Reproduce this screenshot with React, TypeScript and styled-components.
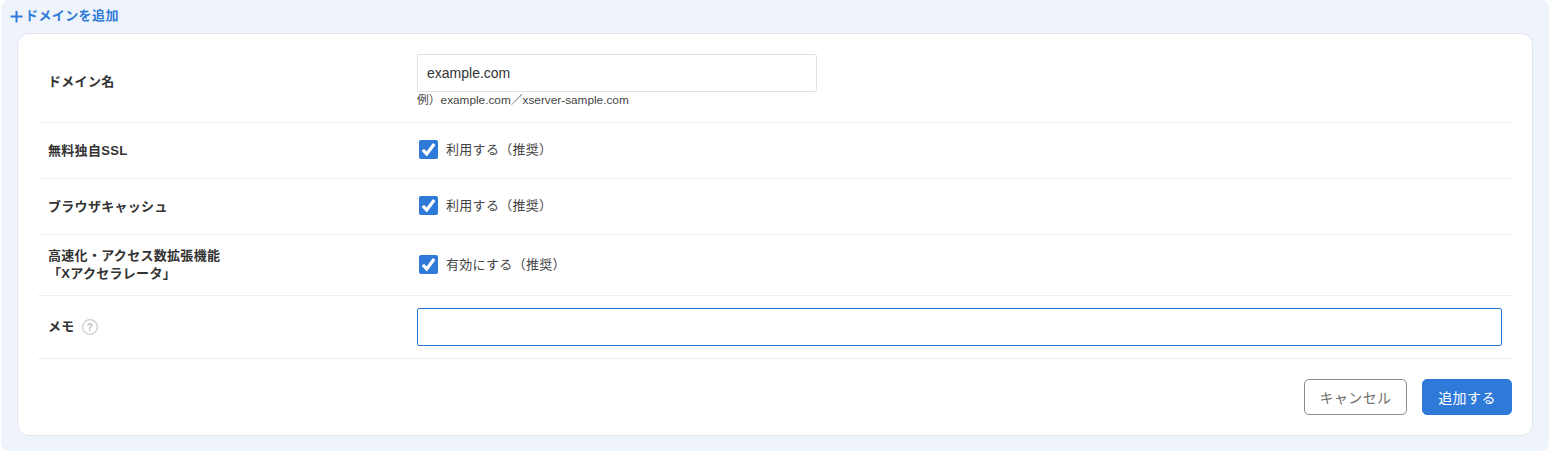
import styled, { createGlobalStyle } from 'styled-components';

const GlobalStyle = createGlobalStyle`
  html, body {
    margin: 0;
    background: #fff;
    font-family: "Liberation Sans", "Noto Sans CJK JP", sans-serif;
    color: #333;
  }
`;

const Panel = styled.div`
  box-sizing: border-box;
  width: 1548px;
  height: 451px;
  margin-left: 1px;
  padding: 0 16px 15px;
  background: #eff4fc;
  border-radius: 8px;
`;

const AddLink = styled.div`
  display: flex;
  align-items: center;
  height: 33px;
  margin-left: -7px;
  padding-bottom: 5px;
  box-sizing: border-box;
  color: #2f7ad9;
  font-size: 13px;
  letter-spacing: 0.4px;
  font-weight: 700;
`;

const PlusIcon = styled.svg`
  width: 13px;
  height: 13px;
  margin-right: 2px;
  margin-top: 5px;
`;

const Card = styled.div`
  box-sizing: border-box;
  height: 403px;
  padding: 0 20px;
  background: #fff;
  border: 1px solid #e3e6ea;
  border-radius: 12px;
`;

const Row = styled.div<{ $height: number }>`
  display: grid;
  grid-template-columns: 379px 1fr;
  align-items: center;
  box-sizing: border-box;
  height: ${(p) => p.$height}px;
  border-bottom: 1px solid #edeff1;
`;

const Label = styled.div<{ $offset?: number }>`
  display: flex;
  align-items: center;
  padding-left: 10px;
  padding-top: ${(p) => p.$offset || 0}px;
  font-size: 13px;
  letter-spacing: 0.3px;
  font-weight: 700;
  line-height: 18px;
  color: #333;
`;

const HelpIcon = styled.svg`
  width: 16px;
  height: 16px;
  margin-left: 7px;
`;

const Value = styled.div<{ $offset?: number }>`
  padding-right: 10px;
  padding-top: ${(p) => p.$offset || 0}px;
`;

const TextInput = styled.input<{ $focused?: boolean; $width?: string }>`
  display: block;
  box-sizing: border-box;
  width: ${(p) => p.$width || '100%'};
  height: 38px;
  padding: 0 9px;
  border: 1px solid ${(p) => (p.$focused ? '#2f7ad9' : '#e0e2e5')};
  border-radius: 2px;
  outline: none;
  background: #fff;
  color: #333;
  font-family: inherit;
  font-size: 14px;
`;

const Hint = styled.div`
  margin-top: 1px;
  font-size: 11.8px;
  line-height: 14px;
  color: #444;
`;

const CheckLabel = styled.label`
  display: flex;
  align-items: center;
  padding-left: 2px;
  margin-top: -2px;
  font-size: 13px;
  letter-spacing: 0.3px;
  color: #444;
`;

const CheckText = styled.span`
  margin-bottom: 2px;
`;

const CheckBox = styled.svg`
  width: 19px;
  height: 19px;
  margin-right: 8px;
`;

const Footer = styled.div`
  display: flex;
  justify-content: flex-end;
  gap: 15px;
  padding-top: 20px;
`;

const Button = styled.button<{ $primary?: boolean }>`
  box-sizing: border-box;
  height: 36px;
  width: ${(p) => (p.$primary ? '90px' : '103px')};
  padding: 0;
  border-radius: 5px;
  border: 1px solid ${(p) => (p.$primary ? '#2f7ad9' : '#8a8a8a')};
  background: ${(p) => (p.$primary ? '#2f7ad9' : '#fff')};
  color: ${(p) => (p.$primary ? '#fff' : '#6f6f6f')};
  font-family: inherit;
  font-size: 14px;
  letter-spacing: 0.4px;
`;

function Check({ label }: { label: string }) {
  return (
    <CheckLabel>
      <CheckBox viewBox="0 0 19 19">
        <rect width="19" height="19" rx="2" fill="#2f7ad9" />
        <path d="M3.8 9.8l3.9 4.2L15.2 4" fill="none" stroke="#fff" strokeWidth="3.2" />
      </CheckBox>
      <CheckText>{label}</CheckText>
    </CheckLabel>
  );
}

export default function App() {
  return (
    <>
      <GlobalStyle />
      <Panel>
        <AddLink>
          <PlusIcon viewBox="0 0 13 13">
            <path d="M6.5 1v11.5M0.5 6.5h12" stroke="#2f7ad9" strokeWidth="2" fill="none" />
          </PlusIcon>
          ドメインを追加
        </AddLink>
        <Card>
          <Row $height={89}>
            <Label $offset={8}>ドメイン名</Label>
            <Value $offset={5}>
              <TextInput $width="400px" defaultValue="example.com" />
              <Hint>例）example.com／xserver-sample.com</Hint>
            </Value>
          </Row>
          <Row $height={56}>
            <Label>無料独自SSL</Label>
            <Value>
              <Check label="利用する（推奨）" />
            </Value>
          </Row>
          <Row $height={56}>
            <Label>ブラウザキャッシュ</Label>
            <Value>
              <Check label="利用する（推奨）" />
            </Value>
          </Row>
          <Row $height={61}>
            <Label>
              高速化・アクセス数拡張機能
              <br />
              「Xアクセラレータ」
            </Label>
            <Value>
              <Check label="有効にする（推奨）" />
            </Value>
          </Row>
          <Row $height={63}>
            <Label>
              メモ
              <HelpIcon viewBox="0 0 16 16">
                <circle cx="8" cy="8" r="7.3" fill="none" stroke="#c9c9c9" strokeWidth="1.2" />
                <text x="8" y="11.5" textAnchor="middle" fontSize="10" fill="#bdbdbd">?</text>
              </HelpIcon>
            </Label>
            <Value>
              <TextInput $focused />
            </Value>
          </Row>
          <Footer>
            <Button>キャンセル</Button>
            <Button $primary>追加する</Button>
          </Footer>
        </Card>
      </Panel>
    </>
  );
}
